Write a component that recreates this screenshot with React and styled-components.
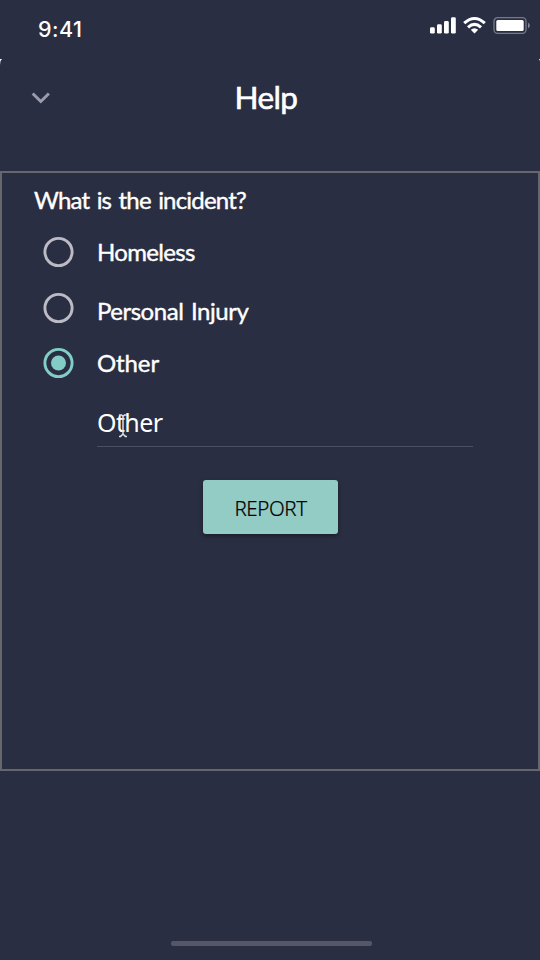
import React from "react";
import styled, { createGlobalStyle } from "styled-components";

const GlobalStyle = createGlobalStyle`
  * { box-sizing: border-box; }
  body { margin: 0; background: #2a2e42; }
`;

const Screen = styled.div`
  display: flex;
  flex-direction: column;
  width: 540px;
  height: 960px;
  overflow: hidden;
  background: #2a2e42;
  color: #fff;
  font-family: "Gill Sans", Lato, sans-serif;
`;

const StatusBar = styled.header`
  display: flex;
  justify-content: space-between;
  height: 59px;
  padding: 16px 10px 0 38px;
`;

const Clock = styled.time`
  font: 500 21.5px/26px Inter, sans-serif;
  letter-spacing: 0.5px;
`;

const StatusIcons = styled.svg`
  width: 102px;
  height: 20px;
`;

const TitleBar = styled.div`
  position: relative;
  display: grid;
  grid-template-columns: 81px 1fr 81px;
  height: 112px;
`;

const Corner = styled.svg`
  position: absolute;
  top: 0;
  left: ${(p) => (p.$right ? "auto" : "0")};
  right: ${(p) => (p.$right ? "0" : "auto")};
  width: 3px;
  height: 7px;
`;

const BackButton = styled.button`
  display: block;
  height: 78px;
  padding: 0;
  border: 0;
  background: none;
`;

const Chevron = styled.svg`
  display: block;
  width: 20px;
  height: 14px;
  margin: 0 auto;
`;

const Title = styled.h1`
  margin: 18px 8px 0 0;
  text-align: center;
  font-size: 31.5px;
  line-height: 40px;
  font-weight: 400;
  letter-spacing: ${(p) => p.$spacing}px;
  -webkit-text-stroke: 0.6px #fff;
`;

const Panel = styled.main`
  height: 600px;
  padding: 11px 0 0 32px;
  border: 2px solid #66676c;
`;

const Question = styled.h2`
  margin: 0;
  font-size: 24px;
  line-height: 32px;
  font-weight: 400;
  -webkit-text-stroke: 0.4px #fff;
  letter-spacing: ${(p) => p.$spacing}px;
  word-spacing: 2px;
`;

const Options = styled.div`
  display: flex;
  flex-direction: column;
  gap: 25px;
  padding: 21px 0 0 9px;
`;

const Option = styled.label`
  display: flex;
  align-items: center;
  gap: 22px;
  height: 30.5px;
`;

const Radio = styled.svg`
  flex: none;
  width: 32px;
  height: 32px;
`;

const OptionText = styled.span`
  margin-top: ${(p) => p.$drop}px;
  font-size: 24px;
  line-height: 30px;
  letter-spacing: ${(p) => p.$spacing}px;
  -webkit-text-stroke: 0.4px #fff;
  white-space: nowrap;
  word-spacing: 2px;
`;

const Field = styled.div`
  position: relative;
  width: 376px;
  height: 47px;
  margin: 21px 0 0 63px;
  border-bottom: 1px solid #4c4e61;
  font: 400 25px/44px "Noto Sans", sans-serif;
  letter-spacing: ${(p) => p.$spacing}px;
`;

const Caret = styled.svg`
  position: absolute;
  left: 21px;
  top: 14px;
  width: 10px;
  height: 24px;
`;

const ReportButton = styled.button`
  display: block;
  width: 135px;
  height: 54px;
  margin: 33px 0 0 168.5px;
  padding: 3px 0 0 1px;
  border: 0;
  border-radius: 3px;
  background: #93cbc5;
  color: #000;
  box-shadow: 0 2px 4px rgba(0, 0, 0, 0.4);
  font: 300 20.5px/30px "Noto Sans", sans-serif;
  letter-spacing: ${(p) => p.$spacing}px;
  -webkit-text-stroke: 0.2px #000;
`;

const HomeIndicator = styled.div`
  width: 201px;
  height: 5px;
  margin: auto 168px 14px 171px;
  border-radius: 2px;
  background: #555769;
`;

const options = [
  { label: "Homeless", drop: 0, spacing: -0.68 },
  { label: "Personal Injury", drop: 7, spacing: -0.47 },
  { label: "Other", drop: 0, spacing: -0.1, selected: true },
];

function RadioMark({ selected }) {
  const color = selected ? "#82cdc5" : "#bcbbc5";
  return (
    <Radio viewBox="0 0 32 32">
      <circle cx="15.5" cy="16" r="13.6" fill="none" stroke={color} strokeWidth="2.9" />
      {selected && <circle cx="15.5" cy="16" r="7.5" fill={color} />}
    </Radio>
  );
}

export default function App() {
  return (
    <Screen>
      <GlobalStyle />
      <StatusBar>
        <Clock>9:41</Clock>
        <StatusIcons viewBox="0 0 102 20">
          <g fill="#fff">
            <rect x="2" y="11.3" width="4.8" height="6.3" rx="1.4" />
            <rect x="9" y="8.2" width="4.8" height="9.4" rx="1.4" />
            <rect x="16" y="5" width="4.8" height="12.6" rx="1.4" />
            <rect x="23" y="1.2" width="4.8" height="16.4" rx="1.4" />
            <path d="M42.8 13.8 L46.5 17.4 L50.2 13.8 Q46.5 10.8 42.8 13.8Z" />
            <rect x="68.3" y="4" width="27.4" height="11" rx="1.6" />
            <path d="M100 6.7 Q101.8 7.2 101.8 9.5 Q101.8 11.8 100 12.3Z" opacity=".42" />
          </g>
          <g fill="none" stroke="#fff" strokeWidth="3.1">
            <path d="M36.2 7.2 Q46.5 -2.2 56.8 7.2" />
            <path d="M40 11.3 Q46.5 5.5 53 11.3" />
          </g>
          <rect x="66" y="1.7" width="32" height="15.6" rx="3.5" fill="none" stroke="#777a86" strokeWidth="1.3" />
        </StatusIcons>
      </StatusBar>
      <TitleBar>
        <Corner viewBox="0 0 3 7"><path d="M0 0H2L.5 2L0 6Z" fill="#fff" /></Corner>
        <Corner $right viewBox="0 0 3 7"><path d="M2 0H3V2Z" fill="#fff" /></Corner>
        <BackButton aria-label="Close">
          <Chevron viewBox="0 0 20 14">
            <path d="M1.7 2.5 L9.8 10.5 L17.9 2.5" fill="none" stroke="#9b9caa" strokeWidth="3" />
          </Chevron>
        </BackButton>
        <Title $spacing={-0.6}>Help</Title>
      </TitleBar>
      <Panel>
        <Question $spacing={-0.8}>What is the incident?</Question>
        <Options>
          {options.map((o) => (
            <Option key={o.label}>
              <RadioMark selected={o.selected} />
              <OptionText $drop={o.drop} $spacing={o.spacing}>{o.label}</OptionText>
            </Option>
          ))}
        </Options>
        <Field $spacing={-0.6}>
          Other
          <Caret viewBox="0 0 10 24">
            <path d="M1 1H3.5L5 2.4L6.5 1H9M5 2.4V20M1 22.4H2.6L5 20L7.4 22.4H9" fill="none" stroke="#dedee4" strokeWidth="1.5" />
          </Caret>
        </Field>
        <ReportButton $spacing={-0.4}>REPORT</ReportButton>
      </Panel>
      <HomeIndicator />
    </Screen>
  );
}
